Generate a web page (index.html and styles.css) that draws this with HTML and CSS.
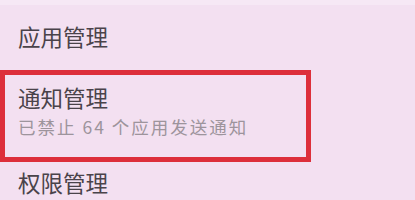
FILE: index.html
```html
<!DOCTYPE html>
<html lang="zh-CN">
<head>
  <meta charset="UTF-8">
  <title>设置</title>
  <link rel="stylesheet" href="styles.css">
</head>
<body>
  <div class="list">
    <div class="item first">应用管理</div>
    <div class="item highlight">
      <div class="title">通知管理</div>
      <div class="sub">已禁止 64 个应用发送通知</div>
    </div>
    <div class="item last">权限管理</div>
  </div>
</body>
</html>
```

FILE: styles.css
```css
* { box-sizing: border-box; margin: 0; padding: 0; }
body { background: #f3e0f1; font-family: "Noto Sans CJK SC", "Noto Sans", sans-serif; color: #4a434a; overflow: hidden; }
.list { display: flex; flex-direction: column; border-top: 5px solid #f6e8f5; }
.item { padding-left: 18px; font-size: 22.5px; }
.item.first { height: 65px; line-height: 56px; padding-top: 3px; }
.item.highlight { width: 311px; border: 5px solid #dd2f3b; padding: 7px 0 18px 13px; }
.title { line-height: 30px; }
.sub { font-size: 17.5px; letter-spacing: 2px; line-height: 24px; margin-top: 3px; color: #9d949c; }
.item.last { line-height: 40px; }
```
